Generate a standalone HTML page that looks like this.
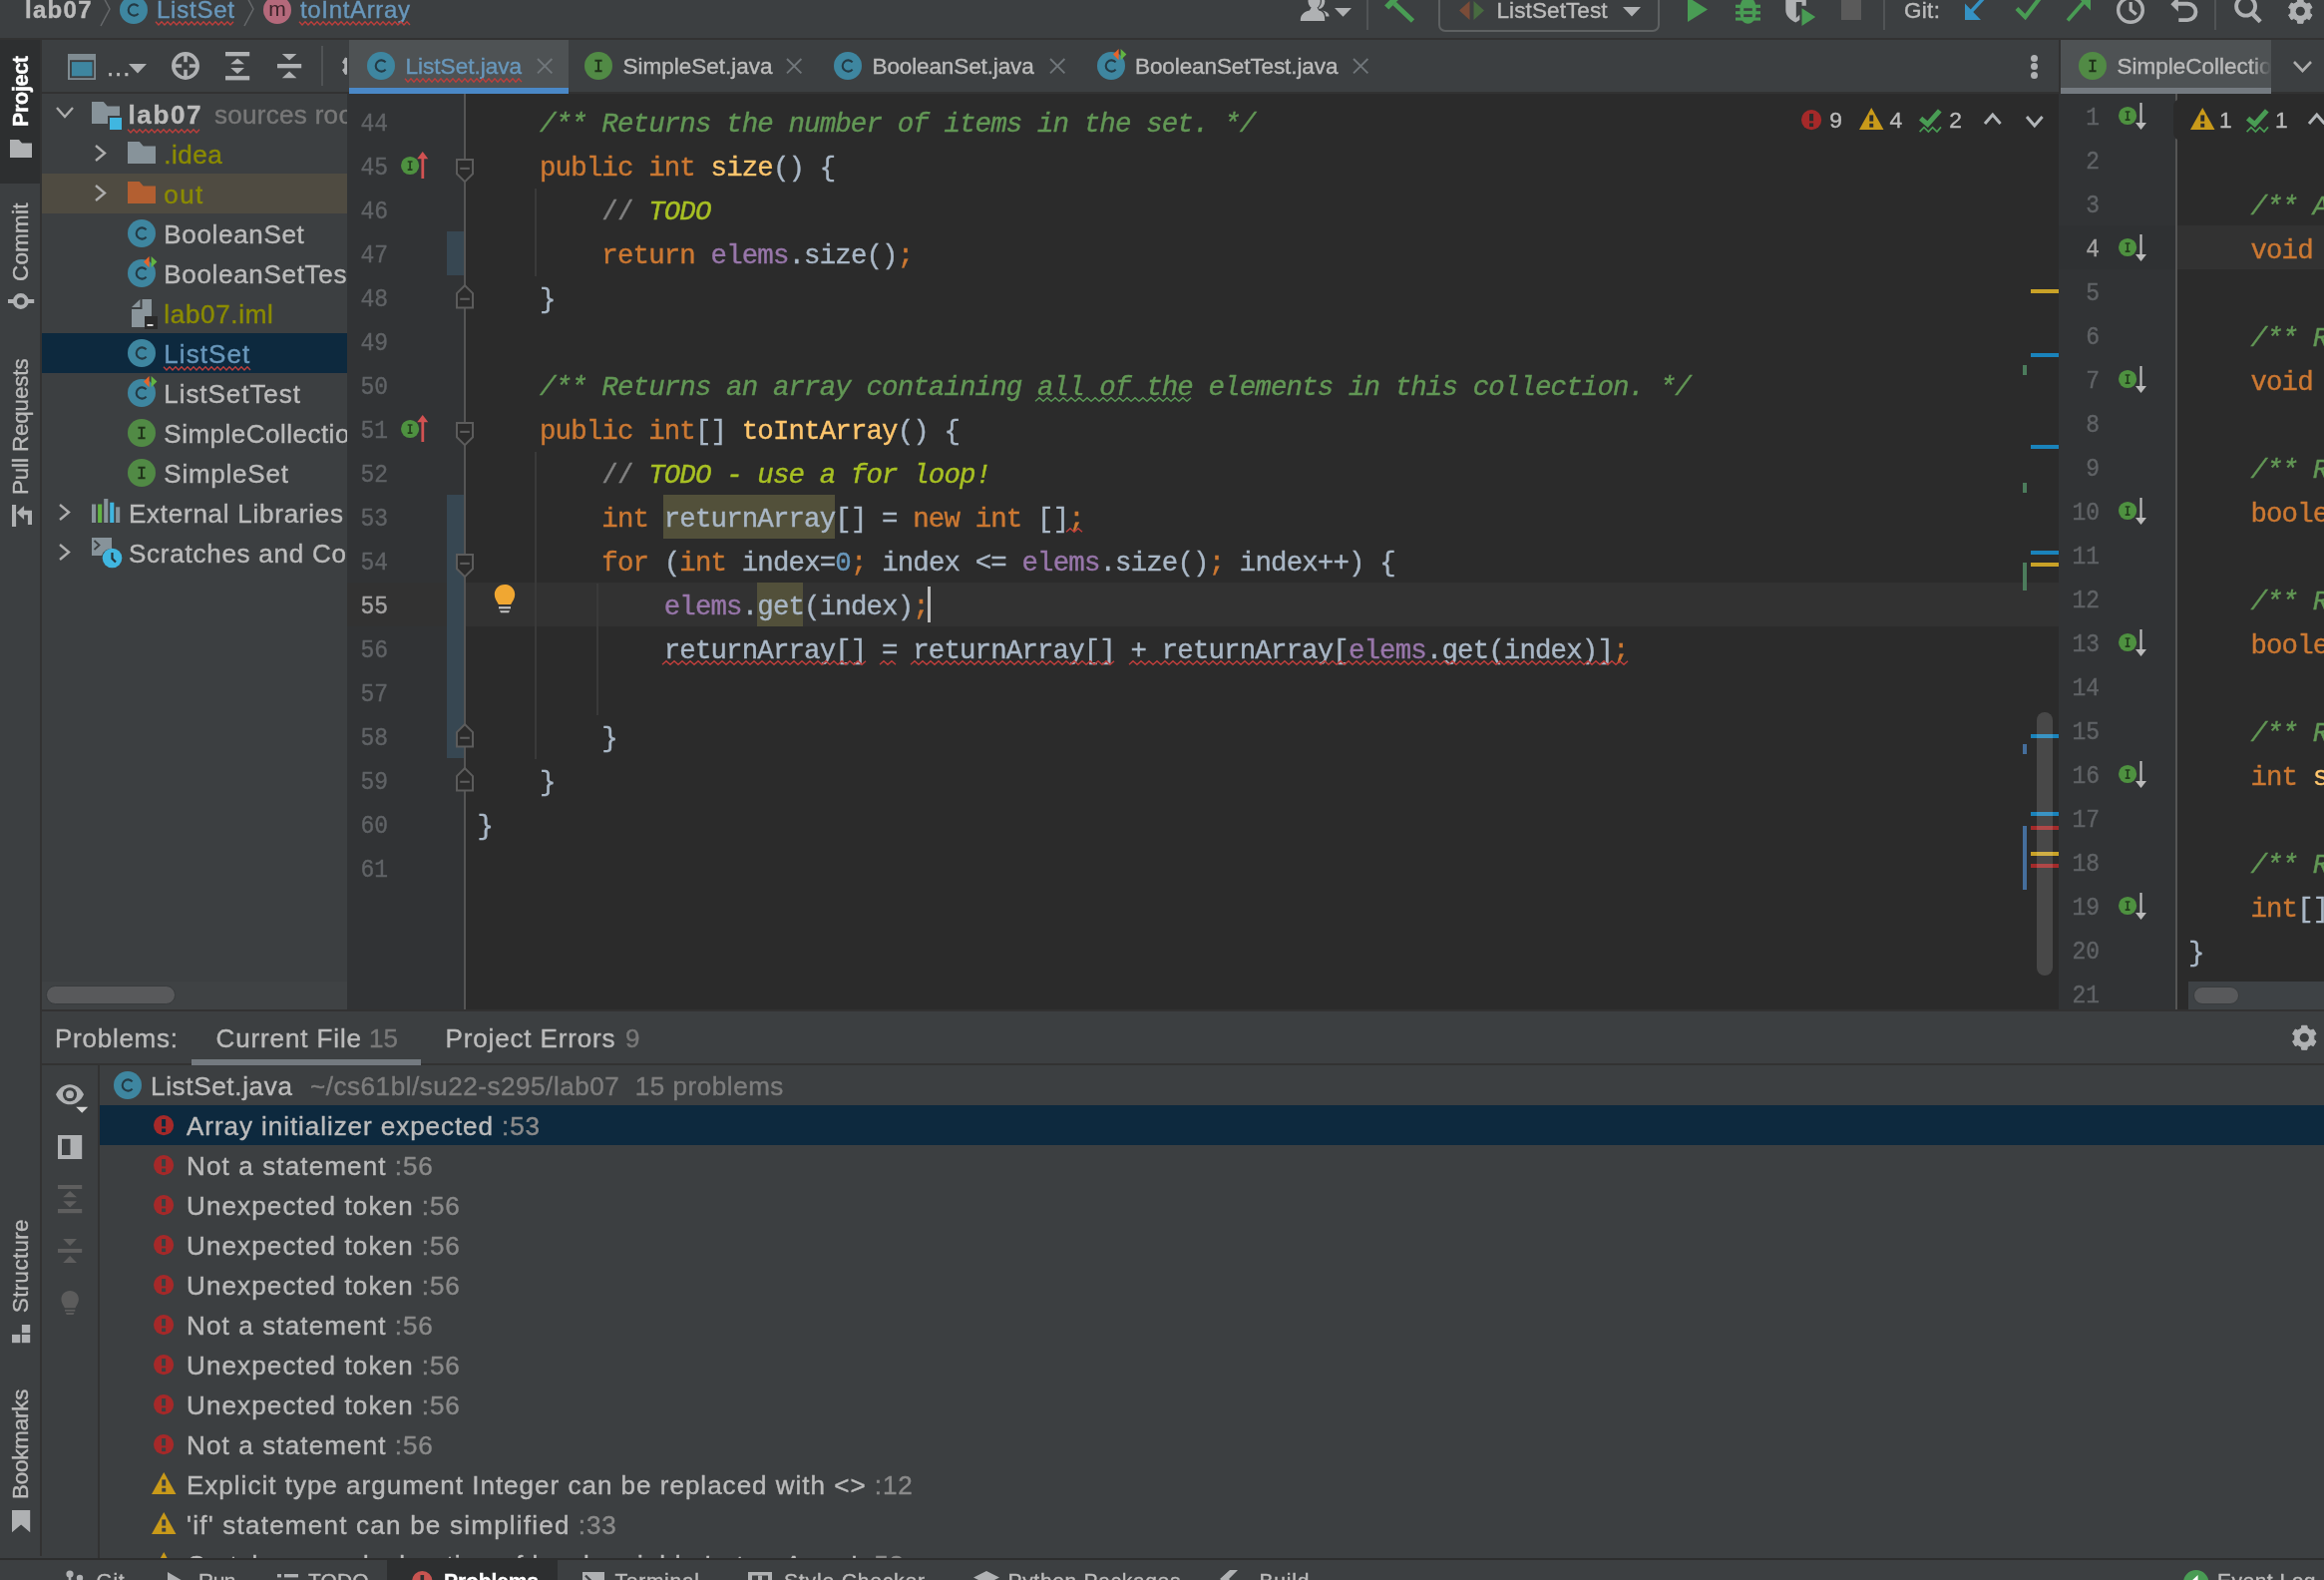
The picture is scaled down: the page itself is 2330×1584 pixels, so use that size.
<!DOCTYPE html>
<html lang="en"><head><meta charset="utf-8"><title>lab07 – ListSet.java</title>
<style>
*{box-sizing:border-box}
html,body{margin:0;padding:0}
body{width:2330px;height:1584px;overflow:hidden;position:relative;background:#3c3f41;
 font-family:"Liberation Sans",sans-serif;font-size:26px;color:#bbbbbb;-webkit-text-stroke:0.4px}
.abs{position:absolute}
.t{position:absolute;white-space:pre;line-height:40px;height:40px;margin-top:1px}
svg{position:absolute;overflow:visible}
.mono{font-family:"Liberation Mono",monospace}
.code{position:absolute;white-space:pre;font-family:"Liberation Mono",monospace;font-size:27.4px;letter-spacing:-0.843px;line-height:44px;height:44px;color:#a9b7c6}
.ln{position:absolute;white-space:pre;font-family:"Liberation Mono",monospace;font-size:25.5px;letter-spacing:0px;line-height:44px;height:44px;color:#606366;text-align:right;transform:scaleX(0.9);transform-origin:100% 50%}
.k{color:#cc7832}.d{color:#629755;font-style:italic}.c{color:#808080}.td{color:#a8c023;font-style:italic}
.f{color:#9876aa}.m{color:#ffc66d}.n{color:#6897bb}
.wavy{background-repeat:repeat-x;background-position:0 100%}
.vt{position:absolute;white-space:pre;transform-origin:0 0;transform:rotate(-90deg);line-height:40px;height:40px;font-size:24px}
</style></head>
<body>
<div id="app" style="position:absolute;left:0;top:0;width:2330px;height:1584px;will-change:transform">
<div class="abs" style="left:348px;top:94px;width:1716px;height:918px;background:#2b2b2b"></div>
<div class="abs" style="left:348px;top:94px;width:117px;height:918px;background:#313335"></div>
<div class="abs" style="left:465px;top:584px;width:1599px;height:44px;background:#323232"></div>
<div class="abs" style="left:348px;top:584px;width:117px;height:44px;background:#323232"></div>
<div class="abs" style="left:465px;top:94px;width:2px;height:918px;background:#555555"></div>
<div class="abs" style="left:448px;top:232px;width:17px;height:44px;background:#374752"></div>
<div class="abs" style="left:448px;top:496px;width:17px;height:264px;background:#374752"></div>
<div class="ln" style="left:340px;top:102.9px;width:49px;color:#606366">44</div>
<div class="ln" style="left:340px;top:146.9px;width:49px;color:#606366">45</div>
<div class="ln" style="left:340px;top:190.9px;width:49px;color:#606366">46</div>
<div class="ln" style="left:340px;top:234.9px;width:49px;color:#606366">47</div>
<div class="ln" style="left:340px;top:278.9px;width:49px;color:#606366">48</div>
<div class="ln" style="left:340px;top:322.9px;width:49px;color:#606366">49</div>
<div class="ln" style="left:340px;top:366.9px;width:49px;color:#606366">50</div>
<div class="ln" style="left:340px;top:410.9px;width:49px;color:#606366">51</div>
<div class="ln" style="left:340px;top:454.9px;width:49px;color:#606366">52</div>
<div class="ln" style="left:340px;top:498.9px;width:49px;color:#606366">53</div>
<div class="ln" style="left:340px;top:542.9px;width:49px;color:#606366">54</div>
<div class="ln" style="left:340px;top:586.9px;width:49px;color:#a4a3a3">55</div>
<div class="ln" style="left:340px;top:630.9px;width:49px;color:#606366">56</div>
<div class="ln" style="left:340px;top:674.9px;width:49px;color:#606366">57</div>
<div class="ln" style="left:340px;top:718.9px;width:49px;color:#606366">58</div>
<div class="ln" style="left:340px;top:762.9px;width:49px;color:#606366">59</div>
<div class="ln" style="left:340px;top:806.9px;width:49px;color:#606366">60</div>
<div class="ln" style="left:340px;top:850.9px;width:49px;color:#606366">61</div>
<svg style="left:401.9px;top:152px" width="34" height="30" viewBox="0 0 34 30"><circle cx="9.1" cy="14" r="9.1" fill="#4e9140"/><path d="M6.7,10 h4.8 M6.7,18.2 h4.8 M9.1,10 v8.2" stroke="#233d1c" stroke-width="1.7" fill="none"/><path d="M21.8,27 V6" stroke="#d25252" stroke-width="2.8" fill="none"/><path d="M16.2,7.2 L21.7,0 L27.3,7.2 Z" fill="#d25252"/></svg>
<svg style="left:401.9px;top:416px" width="34" height="30" viewBox="0 0 34 30"><circle cx="9.1" cy="14" r="9.1" fill="#4e9140"/><path d="M6.7,10 h4.8 M6.7,18.2 h4.8 M9.1,10 v8.2" stroke="#233d1c" stroke-width="1.7" fill="none"/><path d="M21.8,27 V6" stroke="#d25252" stroke-width="2.8" fill="none"/><path d="M16.2,7.2 L21.7,0 L27.3,7.2 Z" fill="#d25252"/></svg>
<svg style="left:457px;top:158.9px" width="18" height="25" viewBox="0 0 18 25"><path d="M1,1 H17 V15.3 L9,23.2 L1,15.3 Z" fill="#2b2b2b" stroke="#5c5c5c" stroke-width="2"/><path d="M4.2,9.9 H13.8" stroke="#5c5c5c" stroke-width="2.1"/></svg>
<svg style="left:457px;top:422.9px" width="18" height="25" viewBox="0 0 18 25"><path d="M1,1 H17 V15.3 L9,23.2 L1,15.3 Z" fill="#2b2b2b" stroke="#5c5c5c" stroke-width="2"/><path d="M4.2,9.9 H13.8" stroke="#5c5c5c" stroke-width="2.1"/></svg>
<svg style="left:457px;top:554.9px" width="18" height="25" viewBox="0 0 18 25"><path d="M1,1 H17 V15.3 L9,23.2 L1,15.3 Z" fill="#2b2b2b" stroke="#5c5c5c" stroke-width="2"/><path d="M4.2,9.9 H13.8" stroke="#5c5c5c" stroke-width="2.1"/></svg>
<svg style="left:457px;top:284.7px" width="18" height="25" viewBox="0 0 18 25"><path d="M1,23.4 H17 V9.1 L9,1.2 L1,9.1 Z" fill="#2b2b2b" stroke="#5c5c5c" stroke-width="2"/><path d="M4.2,14.8 H13.8" stroke="#5c5c5c" stroke-width="2.1"/></svg>
<svg style="left:457px;top:724.7px" width="18" height="25" viewBox="0 0 18 25"><path d="M1,23.4 H17 V9.1 L9,1.2 L1,9.1 Z" fill="#2b2b2b" stroke="#5c5c5c" stroke-width="2"/><path d="M4.2,14.8 H13.8" stroke="#5c5c5c" stroke-width="2.1"/></svg>
<svg style="left:457px;top:768.7px" width="18" height="25" viewBox="0 0 18 25"><path d="M1,23.4 H17 V9.1 L9,1.2 L1,9.1 Z" fill="#2b2b2b" stroke="#5c5c5c" stroke-width="2"/><path d="M4.2,14.8 H13.8" stroke="#5c5c5c" stroke-width="2.1"/></svg>
<div class="abs" style="left:536.0px;top:189px;width:1.5px;height:88px;background:#3a3a3a"></div>
<div class="abs" style="left:536.0px;top:453px;width:1.5px;height:308px;background:#3a3a3a"></div>
<div class="abs" style="left:598.4px;top:585px;width:1.5px;height:132px;background:#3a3a3a"></div>
<div class="abs" style="left:664.8px;top:496px;width:172.1px;height:44px;background:#52503a"></div>
<div class="abs" style="left:759.4px;top:584px;width:45.3px;height:44px;background:#52503a"></div>
<div class="code" style="left:478.6px;top:102.8px">    <span class="d">/** Returns the number of items in the set. */</span></div>
<div class="code" style="left:478.6px;top:146.8px">    <span class="k">public int </span><span class="m">size</span>() {</div>
<div class="code" style="left:478.6px;top:190.8px">        <span class="c">// </span><span class="td">TODO</span></div>
<div class="code" style="left:478.6px;top:234.8px">        <span class="k">return </span><span class="f">elems</span>.size()<span class="k">;</span></div>
<div class="code" style="left:478.6px;top:278.8px">    }</div>
<div class="code" style="left:478.6px;top:366.8px">    <span class="d">/** Returns an array containing all of the elements in this collection. */</span></div>
<div class="code" style="left:478.6px;top:410.8px">    <span class="k">public int</span>[] <span class="m">toIntArray</span>() {</div>
<div class="code" style="left:478.6px;top:454.8px">        <span class="c">// </span><span class="td">TODO - use a for loop!</span></div>
<div class="code" style="left:478.6px;top:498.8px">        <span class="k">int </span>returnArray[] = <span class="k">new int </span>[]<span class="k">;</span></div>
<div class="code" style="left:478.6px;top:542.8px">        <span class="k">for </span>(<span class="k">int </span>index=<span class="n">0</span><span class="k">; </span>index &lt;= <span class="f">elems</span>.size()<span class="k">; </span>index++) {</div>
<div class="code" style="left:478.6px;top:586.8px">            <span class="f">elems</span>.get(index)<span class="k">;</span></div>
<div class="code" style="left:478.6px;top:630.8px">            returnArray[] = returnArray[] + returnArray[<span class="f">elems</span>.get(index)]<span class="k">;</span></div>
<div class="code" style="left:478.6px;top:718.8px">        }</div>
<div class="code" style="left:478.6px;top:762.8px">    }</div>
<div class="code" style="left:478.6px;top:806.8px">}</div>
<div class="abs" style="left:929.5px;top:588px;width:3px;height:36px;background:#bbbbbb"></div>
<svg style="left:663.8px;top:661.8px" width="204.0" height="5.6"><polyline points="0.0,4.3 4.0,0.7 8.0,4.3 12.0,0.7 16.0,4.3 20.0,0.7 24.0,4.3 28.0,0.7 32.0,4.3 36.0,0.7 40.0,4.3 44.0,0.7 48.0,4.3 52.0,0.7 56.0,4.3 60.0,0.7 64.0,4.3 68.0,0.7 72.0,4.3 76.0,0.7 80.0,4.3 84.0,0.7 88.0,4.3 92.0,0.7 96.0,4.3 100.0,0.7 104.0,4.3 108.0,0.7 112.0,4.3 116.0,0.7 120.0,4.3 124.0,0.7 128.0,4.3 132.0,0.7 136.0,4.3 140.0,0.7 144.0,4.3 148.0,0.7 152.0,4.3 156.0,0.7 160.0,4.3 164.0,0.7 168.0,4.3 172.0,0.7 176.0,4.3 180.0,0.7 184.0,4.3 188.0,0.7 192.0,4.3 196.0,0.7 200.0,4.3 204.0,0.7" fill="none" stroke="#bc3f3c" stroke-width="1.5"/></svg>
<svg style="left:882.2px;top:661.8px" width="16.0" height="5.6"><polyline points="0.0,4.3 4.0,0.7 8.0,4.3 12.0,0.7 16.0,4.3" fill="none" stroke="#bc3f3c" stroke-width="1.5"/></svg>
<svg style="left:913.4px;top:661.8px" width="204.0" height="5.6"><polyline points="0.0,4.3 4.0,0.7 8.0,4.3 12.0,0.7 16.0,4.3 20.0,0.7 24.0,4.3 28.0,0.7 32.0,4.3 36.0,0.7 40.0,4.3 44.0,0.7 48.0,4.3 52.0,0.7 56.0,4.3 60.0,0.7 64.0,4.3 68.0,0.7 72.0,4.3 76.0,0.7 80.0,4.3 84.0,0.7 88.0,4.3 92.0,0.7 96.0,4.3 100.0,0.7 104.0,4.3 108.0,0.7 112.0,4.3 116.0,0.7 120.0,4.3 124.0,0.7 128.0,4.3 132.0,0.7 136.0,4.3 140.0,0.7 144.0,4.3 148.0,0.7 152.0,4.3 156.0,0.7 160.0,4.3 164.0,0.7 168.0,4.3 172.0,0.7 176.0,4.3 180.0,0.7 184.0,4.3 188.0,0.7 192.0,4.3 196.0,0.7 200.0,4.3 204.0,0.7" fill="none" stroke="#bc3f3c" stroke-width="1.5"/></svg>
<svg style="left:1131.8px;top:661.8px" width="500.0" height="5.6"><polyline points="0.0,4.3 4.0,0.7 8.0,4.3 12.0,0.7 16.0,4.3 20.0,0.7 24.0,4.3 28.0,0.7 32.0,4.3 36.0,0.7 40.0,4.3 44.0,0.7 48.0,4.3 52.0,0.7 56.0,4.3 60.0,0.7 64.0,4.3 68.0,0.7 72.0,4.3 76.0,0.7 80.0,4.3 84.0,0.7 88.0,4.3 92.0,0.7 96.0,4.3 100.0,0.7 104.0,4.3 108.0,0.7 112.0,4.3 116.0,0.7 120.0,4.3 124.0,0.7 128.0,4.3 132.0,0.7 136.0,4.3 140.0,0.7 144.0,4.3 148.0,0.7 152.0,4.3 156.0,0.7 160.0,4.3 164.0,0.7 168.0,4.3 172.0,0.7 176.0,4.3 180.0,0.7 184.0,4.3 188.0,0.7 192.0,4.3 196.0,0.7 200.0,4.3 204.0,0.7 208.0,4.3 212.0,0.7 216.0,4.3 220.0,0.7 224.0,4.3 228.0,0.7 232.0,4.3 236.0,0.7 240.0,4.3 244.0,0.7 248.0,4.3 252.0,0.7 256.0,4.3 260.0,0.7 264.0,4.3 268.0,0.7 272.0,4.3 276.0,0.7 280.0,4.3 284.0,0.7 288.0,4.3 292.0,0.7 296.0,4.3 300.0,0.7 304.0,4.3 308.0,0.7 312.0,4.3 316.0,0.7 320.0,4.3 324.0,0.7 328.0,4.3 332.0,0.7 336.0,4.3 340.0,0.7 344.0,4.3 348.0,0.7 352.0,4.3 356.0,0.7 360.0,4.3 364.0,0.7 368.0,4.3 372.0,0.7 376.0,4.3 380.0,0.7 384.0,4.3 388.0,0.7 392.0,4.3 396.0,0.7 400.0,4.3 404.0,0.7 408.0,4.3 412.0,0.7 416.0,4.3 420.0,0.7 424.0,4.3 428.0,0.7 432.0,4.3 436.0,0.7 440.0,4.3 444.0,0.7 448.0,4.3 452.0,0.7 456.0,4.3 460.0,0.7 464.0,4.3 468.0,0.7 472.0,4.3 476.0,0.7 480.0,4.3 484.0,0.7 488.0,4.3 492.0,0.7 496.0,4.3 500.0,0.7" fill="none" stroke="#bc3f3c" stroke-width="1.5"/></svg>
<svg style="left:1069.4px;top:529.4px" width="16.0" height="5.6"><polyline points="0.0,4.3 4.0,0.7 8.0,4.3 12.0,0.7 16.0,4.3" fill="none" stroke="#bc3f3c" stroke-width="1.5"/></svg>
<svg style="left:1038.2px;top:397.9px" width="156.0" height="5.6"><polyline points="0.0,4.3 4.0,0.7 8.0,4.3 12.0,0.7 16.0,4.3 20.0,0.7 24.0,4.3 28.0,0.7 32.0,4.3 36.0,0.7 40.0,4.3 44.0,0.7 48.0,4.3 52.0,0.7 56.0,4.3 60.0,0.7 64.0,4.3 68.0,0.7 72.0,4.3 76.0,0.7 80.0,4.3 84.0,0.7 88.0,4.3 92.0,0.7 96.0,4.3 100.0,0.7 104.0,4.3 108.0,0.7 112.0,4.3 116.0,0.7 120.0,4.3 124.0,0.7 128.0,4.3 132.0,0.7 136.0,4.3 140.0,0.7 144.0,4.3 148.0,0.7 152.0,4.3 156.0,0.7" fill="none" stroke="#5a9556" stroke-width="1.5"/></svg>
<svg style="left:493px;top:584.8px" width="26" height="30" viewBox="0 0 26 30"><path d="M13,1 C19,1 23.2,5.6 23.2,11 C23.2,15 21,17.5 19.2,21 H6.8 C5,17.5 2.8,15 2.8,11 C2.8,5.6 7,1 13,1 Z" fill="#f0a732"/><rect x="7" y="23.2" width="12" height="2.1" fill="#c4c4c4"/><path d="M8,27.3 H18 L17,29.2 H9 Z" fill="#c4c4c4"/></svg>
<svg style="left:1806.0px;top:110.0px" width="20.2" height="20.2" viewBox="0 0 20 20"><circle cx="10" cy="10" r="10" fill="#a52929"/><rect x="8" y="4" width="4" height="7.2" fill="#2b2b2b"/><rect x="8" y="13.3" width="4" height="3.6" fill="#2b2b2b"/></svg>
<div class="t" style="left:1834.3px;top:98.8px;font-size:22.8px;color:#bbbbbb;letter-spacing:0px;line-height:40px;height:40px;font-weight:normal;">9</div>
<svg style="left:1863.75px;top:108.2px" width="24.5" height="22" viewBox="0 0 24.5 22"><path d="M12.25,0 L24.5,22 H0 Z" fill="#c99a1a"/><rect x="10.3" y="7.4" width="3.9" height="6.2" fill="#2b2b2b"/><rect x="10.3" y="15.8" width="3.9" height="3.8" fill="#2b2b2b"/></svg>
<div class="t" style="left:1894.5px;top:98.8px;font-size:22.8px;color:#bbbbbb;letter-spacing:0px;line-height:40px;height:40px;font-weight:normal;">4</div>
<svg style="left:1924.4px;top:109.3px" width="24" height="26" viewBox="0 0 24 26"><path d="M1.6,9.6 L8.6,15.6 L20.8,1.8" fill="none" stroke="#499c54" stroke-width="5"/><polyline points="0.6,23.2 5,18.6 9.4,23 13.6,18.6 18,23 22,18.4" fill="none" stroke="#499c54" stroke-width="1.7"/></svg>
<div class="t" style="left:1954.3px;top:98.8px;font-size:22.8px;color:#bbbbbb;letter-spacing:0px;line-height:40px;height:40px;font-weight:normal;">2</div>
<svg style="left:1989px;top:113.6px" width="17.6" height="11"><polyline points="1,10 8.8,1 16.6,10" fill="none" stroke="#b2b6b9" stroke-width="3"/></svg>
<svg style="left:2031.2px;top:115.6px" width="17.6" height="11"><polyline points="1,1 8.8,10 16.6,1" fill="none" stroke="#b2b6b9" stroke-width="3"/></svg>
<div class="abs" style="left:2036px;top:290px;width:28px;height:4px;background:#c9a227"></div>
<div class="abs" style="left:2036px;top:354px;width:28px;height:4px;background:#1a83bb"></div>
<div class="abs" style="left:2036px;top:446px;width:28px;height:4px;background:#1a83bb"></div>
<div class="abs" style="left:2036px;top:552px;width:28px;height:4px;background:#1a83bb"></div>
<div class="abs" style="left:2036px;top:564px;width:28px;height:4px;background:#c9a227"></div>
<div class="abs" style="left:2036px;top:736px;width:28px;height:4px;background:#1a83bb"></div>
<div class="abs" style="left:2036px;top:814px;width:28px;height:4px;background:#1a83bb"></div>
<div class="abs" style="left:2036px;top:828px;width:28px;height:4px;background:#a32a2a"></div>
<div class="abs" style="left:2036px;top:854px;width:28px;height:4px;background:#c9a227"></div>
<div class="abs" style="left:2036px;top:866px;width:28px;height:4px;background:#a32a2a"></div>
<div class="abs" style="left:2028px;top:366px;width:4px;height:10px;background:#4c7c5c"></div>
<div class="abs" style="left:2028px;top:484px;width:4px;height:10px;background:#4c7c5c"></div>
<div class="abs" style="left:2028px;top:564px;width:4px;height:28px;background:#4c7c5c"></div>
<div class="abs" style="left:2028px;top:746px;width:4px;height:10px;background:#456e9c"></div>
<div class="abs" style="left:2028px;top:828px;width:4px;height:64px;background:#456e9c"></div>
<div class="abs" style="left:2042px;top:713.7px;width:16px;height:264.5px;border-radius:8px;background:rgba(255,255,255,0.14)"></div>
<div class="abs" style="left:2066px;top:94px;width:264px;height:918px;background:#2b2b2b"></div>
<div class="abs" style="left:2064px;top:94px;width:118px;height:918px;background:#313335"></div>
<div class="abs" style="left:2064px;top:226.4px;width:118px;height:43.6px;background:#2f3133"></div>
<div class="abs" style="left:2182px;top:226.4px;width:148px;height:43.6px;background:#323232"></div>
<div class="abs" style="left:2181px;top:94px;width:2px;height:918px;background:#555555"></div>
<div class="ln" style="left:2057px;top:97.0px;width:48px;color:#606366">1</div>
<div class="ln" style="left:2057px;top:141.0px;width:48px;color:#606366">2</div>
<div class="ln" style="left:2057px;top:185.0px;width:48px;color:#606366">3</div>
<div class="ln" style="left:2057px;top:229.0px;width:48px;color:#a4a3a3">4</div>
<div class="ln" style="left:2057px;top:273.0px;width:48px;color:#606366">5</div>
<div class="ln" style="left:2057px;top:317.0px;width:48px;color:#606366">6</div>
<div class="ln" style="left:2057px;top:361.0px;width:48px;color:#606366">7</div>
<div class="ln" style="left:2057px;top:405.0px;width:48px;color:#606366">8</div>
<div class="ln" style="left:2057px;top:449.0px;width:48px;color:#606366">9</div>
<div class="ln" style="left:2057px;top:493.0px;width:48px;color:#606366">10</div>
<div class="ln" style="left:2057px;top:537.0px;width:48px;color:#606366">11</div>
<div class="ln" style="left:2057px;top:581.0px;width:48px;color:#606366">12</div>
<div class="ln" style="left:2057px;top:625.0px;width:48px;color:#606366">13</div>
<div class="ln" style="left:2057px;top:669.0px;width:48px;color:#606366">14</div>
<div class="ln" style="left:2057px;top:713.0px;width:48px;color:#606366">15</div>
<div class="ln" style="left:2057px;top:757.0px;width:48px;color:#606366">16</div>
<div class="ln" style="left:2057px;top:801.0px;width:48px;color:#606366">17</div>
<div class="ln" style="left:2057px;top:845.0px;width:48px;color:#606366">18</div>
<div class="ln" style="left:2057px;top:889.0px;width:48px;color:#606366">19</div>
<div class="ln" style="left:2057px;top:933.0px;width:48px;color:#606366">20</div>
<div class="ln" style="left:2057px;top:977.0px;width:48px;color:#606366">21</div>
<svg style="left:2123.9px;top:102px" width="34" height="30" viewBox="0 0 34 30"><circle cx="9.1" cy="14" r="9.1" fill="#4e9140"/><path d="M6.7,10 h4.8 M6.7,18.2 h4.8 M9.1,10 v8.2" stroke="#233d1c" stroke-width="1.7" fill="none"/><path d="M22.5,1 V23" stroke="#bbbbbb" stroke-width="2.2" fill="none"/><path d="M17,21 L22.5,28 L28,21 Z" fill="#bbbbbb"/></svg>
<svg style="left:2123.9px;top:234px" width="34" height="30" viewBox="0 0 34 30"><circle cx="9.1" cy="14" r="9.1" fill="#4e9140"/><path d="M6.7,10 h4.8 M6.7,18.2 h4.8 M9.1,10 v8.2" stroke="#233d1c" stroke-width="1.7" fill="none"/><path d="M22.5,1 V23" stroke="#bbbbbb" stroke-width="2.2" fill="none"/><path d="M17,21 L22.5,28 L28,21 Z" fill="#bbbbbb"/></svg>
<svg style="left:2123.9px;top:366px" width="34" height="30" viewBox="0 0 34 30"><circle cx="9.1" cy="14" r="9.1" fill="#4e9140"/><path d="M6.7,10 h4.8 M6.7,18.2 h4.8 M9.1,10 v8.2" stroke="#233d1c" stroke-width="1.7" fill="none"/><path d="M22.5,1 V23" stroke="#bbbbbb" stroke-width="2.2" fill="none"/><path d="M17,21 L22.5,28 L28,21 Z" fill="#bbbbbb"/></svg>
<svg style="left:2123.9px;top:498px" width="34" height="30" viewBox="0 0 34 30"><circle cx="9.1" cy="14" r="9.1" fill="#4e9140"/><path d="M6.7,10 h4.8 M6.7,18.2 h4.8 M9.1,10 v8.2" stroke="#233d1c" stroke-width="1.7" fill="none"/><path d="M22.5,1 V23" stroke="#bbbbbb" stroke-width="2.2" fill="none"/><path d="M17,21 L22.5,28 L28,21 Z" fill="#bbbbbb"/></svg>
<svg style="left:2123.9px;top:630px" width="34" height="30" viewBox="0 0 34 30"><circle cx="9.1" cy="14" r="9.1" fill="#4e9140"/><path d="M6.7,10 h4.8 M6.7,18.2 h4.8 M9.1,10 v8.2" stroke="#233d1c" stroke-width="1.7" fill="none"/><path d="M22.5,1 V23" stroke="#bbbbbb" stroke-width="2.2" fill="none"/><path d="M17,21 L22.5,28 L28,21 Z" fill="#bbbbbb"/></svg>
<svg style="left:2123.9px;top:762px" width="34" height="30" viewBox="0 0 34 30"><circle cx="9.1" cy="14" r="9.1" fill="#4e9140"/><path d="M6.7,10 h4.8 M6.7,18.2 h4.8 M9.1,10 v8.2" stroke="#233d1c" stroke-width="1.7" fill="none"/><path d="M22.5,1 V23" stroke="#bbbbbb" stroke-width="2.2" fill="none"/><path d="M17,21 L22.5,28 L28,21 Z" fill="#bbbbbb"/></svg>
<svg style="left:2123.9px;top:894px" width="34" height="30" viewBox="0 0 34 30"><circle cx="9.1" cy="14" r="9.1" fill="#4e9140"/><path d="M6.7,10 h4.8 M6.7,18.2 h4.8 M9.1,10 v8.2" stroke="#233d1c" stroke-width="1.7" fill="none"/><path d="M22.5,1 V23" stroke="#bbbbbb" stroke-width="2.2" fill="none"/><path d="M17,21 L22.5,28 L28,21 Z" fill="#bbbbbb"/></svg>
<div class="abs" style="left:2183px;top:94px;width:147px;height:918px;overflow:hidden">
<div class="code" style="left:11px;top:91.6px">    <span class="d">/** Adds k to the set. */</span></div>
<div class="code" style="left:11px;top:135.6px">    <span class="k">void </span>add(<span class="k">int </span>k);</div>
<div class="code" style="left:11px;top:223.6px">    <span class="d">/** Removes k from the set. */</span></div>
<div class="code" style="left:11px;top:267.6px">    <span class="k">void </span>remove(<span class="k">int </span>k);</div>
<div class="code" style="left:11px;top:355.6px">    <span class="d">/** Return true if k is in this set, false otherwise. */</span></div>
<div class="code" style="left:11px;top:399.6px">    <span class="k">boolean </span>contains(<span class="k">int </span>k);</div>
<div class="code" style="left:11px;top:487.6px">    <span class="d">/** Return true if this set is empty, false otherwise. */</span></div>
<div class="code" style="left:11px;top:531.6px">    <span class="k">boolean </span>isEmpty();</div>
<div class="code" style="left:11px;top:619.6px">    <span class="d">/** Returns the number of items in the set. */</span></div>
<div class="code" style="left:11px;top:663.6px">    <span class="k">int </span><span class="m">size</span>();</div>
<div class="code" style="left:11px;top:751.6px">    <span class="d">/** Returns an array containing all of the elements in this collection. */</span></div>
<div class="code" style="left:11px;top:795.6px">    <span class="k">int</span>[] <span class="m">toIntArray</span>();</div>
<div class="code" style="left:11px;top:839.6px">}</div>
</div>
<div class="abs" style="left:2179px;top:99px;width:160px;height:42px;border-radius:8px;background:#2b2b2b"></div>
<svg style="left:2195.75px;top:108.2px" width="24.5" height="22" viewBox="0 0 24.5 22"><path d="M12.25,0 L24.5,22 H0 Z" fill="#c99a1a"/><rect x="10.3" y="7.4" width="3.9" height="6.2" fill="#2b2b2b"/><rect x="10.3" y="15.8" width="3.9" height="3.8" fill="#2b2b2b"/></svg>
<div class="t" style="left:2225px;top:98.8px;font-size:22.8px;color:#bbbbbb;letter-spacing:0px;line-height:40px;height:40px;font-weight:normal;">1</div>
<svg style="left:2251.5px;top:109.3px" width="24" height="26" viewBox="0 0 24 26"><path d="M1.6,9.6 L8.6,15.6 L20.8,1.8" fill="none" stroke="#499c54" stroke-width="5"/><polyline points="0.6,23.2 5,18.6 9.4,23 13.6,18.6 18,23 22,18.4" fill="none" stroke="#499c54" stroke-width="1.7"/></svg>
<div class="t" style="left:2281px;top:98.8px;font-size:22.8px;color:#bbbbbb;letter-spacing:0px;line-height:40px;height:40px;font-weight:normal;">1</div>
<svg style="left:2314px;top:113.6px" width="17.6" height="11"><polyline points="1,10 8.8,1 16.6,10" fill="none" stroke="#b2b6b9" stroke-width="3"/></svg>
<div class="abs" style="left:2194px;top:984px;width:136px;height:28px;background:#3e4245"></div>
<div class="abs" style="left:2198.6px;top:988.6px;width:46.8px;height:18.5px;border-radius:9.3px;background:#58595b;border:1.2px solid #383b3d"></div>
<div class="abs" style="left:348px;top:40px;width:1982px;height:52px;background:#3c3f41"></div>
<div class="abs" style="left:348px;top:92px;width:1982px;height:2px;background:#323232"></div>
<div class="abs" style="left:350px;top:40px;width:220px;height:48px;background:#4e5254"></div>
<div class="abs" style="left:350px;top:88px;width:220px;height:6px;background:#4a88c7"></div>
<svg style="left:368px;top:52px" width="28" height="28" viewBox="0 0 28 28"><circle cx="14" cy="14" r="14" fill="#3e86a0"/><path d="M18.6,10.4 A5.6,5.6 0 1 0 18.6,17.6" fill="none" stroke="#233a45" stroke-width="2.1"/></svg>
<div class="t" style="left:406.5px;top:46px;font-size:22.5px;color:#6897bb;letter-spacing:0.027px;line-height:40px;height:40px;font-weight:normal;">ListSet.java</div>
<svg style="left:539.1999999999999px;top:58.8px" width="14.4" height="14.4"><path d="M0,0 L14.4,14.4 M14.4,0 L0,14.4" stroke="#70767a" stroke-width="1.9" fill="none"/></svg>
<svg style="left:406px;top:78px" width="117.0" height="5.4"><polyline points="0.0,0.7 3.0,4.1 6.0,0.7 9.0,4.1 12.0,0.7 15.0,4.1 18.0,0.7 21.0,4.1 24.0,0.7 27.0,4.1 30.0,0.7 33.0,4.1 36.0,0.7 39.0,4.1 42.0,0.7 45.0,4.1 48.0,0.7 51.0,4.1 54.0,0.7 57.0,4.1 60.0,0.7 63.0,4.1 66.0,0.7 69.0,4.1 72.0,0.7 75.0,4.1 78.0,0.7 81.0,4.1 84.0,0.7 87.0,4.1 90.0,0.7 93.0,4.1 96.0,0.7 99.0,4.1 102.0,0.7 105.0,4.1 108.0,0.7 111.0,4.1 114.0,0.7 117.0,4.1" fill="none" stroke="#bc3f3c" stroke-width="1.4"/></svg>
<svg style="left:586px;top:52px" width="28" height="28" viewBox="0 0 28 28"><circle cx="14" cy="14" r="14" fill="#518a45"/><path d="M10.4,8.8 h7.2 M10.4,19.2 h7.2 M14,8.8 v10.4" stroke="#1f3319" stroke-width="2.1" fill="none"/></svg>
<div class="t" style="left:624.5px;top:46px;font-size:22.5px;color:#bbbbbb;letter-spacing:-0.005px;line-height:40px;height:40px;font-weight:normal;">SimpleSet.java</div>
<svg style="left:788.8px;top:58.8px" width="14.4" height="14.4"><path d="M0,0 L14.4,14.4 M14.4,0 L0,14.4" stroke="#70767a" stroke-width="1.9" fill="none"/></svg>
<svg style="left:836px;top:52px" width="28" height="28" viewBox="0 0 28 28"><circle cx="14" cy="14" r="14" fill="#3e86a0"/><path d="M18.6,10.4 A5.6,5.6 0 1 0 18.6,17.6" fill="none" stroke="#233a45" stroke-width="2.1"/></svg>
<div class="t" style="left:874.5px;top:46px;font-size:22.5px;color:#bbbbbb;letter-spacing:-0.119px;line-height:40px;height:40px;font-weight:normal;">BooleanSet.java</div>
<svg style="left:1052.8px;top:58.8px" width="14.4" height="14.4"><path d="M0,0 L14.4,14.4 M14.4,0 L0,14.4" stroke="#70767a" stroke-width="1.9" fill="none"/></svg>
<svg style="left:1100px;top:52px" width="28" height="28" viewBox="0 0 28 28"><circle cx="14" cy="14" r="14" fill="#3e86a0"/><path d="M14.5,-6 h16 v13.5 h-16 z" fill="none"/><polygon points="15.2,1 22.4,-6 22.4,8" fill="#3c3f41" opacity="0"/><path d="M18.6,10.4 A5.6,5.6 0 1 0 18.6,17.6" fill="none" stroke="#233a45" stroke-width="2.1"/><rect x="15" y="-4" width="15" height="11" fill="none"/><polygon points="16,2.6 21.6,-3 21.6,8.2" fill="#e8642a"/><polygon points="23.6,-3 29.4,2.6 23.6,8.2" fill="#62b543"/></svg>
<div class="t" style="left:1138px;top:46px;font-size:22.5px;color:#bbbbbb;letter-spacing:-0.096px;line-height:40px;height:40px;font-weight:normal;">BooleanSetTest.java</div>
<svg style="left:1356.8px;top:58.8px" width="14.4" height="14.4"><path d="M0,0 L14.4,14.4 M14.4,0 L0,14.4" stroke="#70767a" stroke-width="1.9" fill="none"/></svg>
<div class="abs" style="left:2036px;top:54.5px;width:7px;height:7px;border-radius:50%;background:#afb1b3"></div>
<div class="abs" style="left:2036px;top:63px;width:7px;height:7px;border-radius:50%;background:#afb1b3"></div>
<div class="abs" style="left:2036px;top:71.5px;width:7px;height:7px;border-radius:50%;background:#afb1b3"></div>
<div class="abs" style="left:2064px;top:40px;width:2px;height:54px;background:#323232"></div>
<div class="abs" style="left:2066px;top:40px;width:211px;height:48px;background:#4e5254"></div>
<div class="abs" style="left:2066px;top:88px;width:211px;height:6px;background:#747a80"></div>
<svg style="left:2084px;top:52px" width="28" height="28" viewBox="0 0 28 28"><circle cx="14" cy="14" r="14" fill="#518a45"/><path d="M10.4,8.8 h7.2 M10.4,19.2 h7.2 M14,8.8 v10.4" stroke="#1f3319" stroke-width="2.1" fill="none"/></svg>
<div class="abs" style="left:2066px;top:40px;width:211px;height:48px;overflow:hidden"><div class="t" style="left:56.5px;top:6px;font-size:22.5px;color:#bbbbbb;letter-spacing:0px;line-height:40px;height:40px;font-weight:normal;">SimpleCollection.java</div><div class="abs" style="left:191px;top:0;width:20px;height:48px;background:linear-gradient(90deg,rgba(78,82,84,0),#4e5254)"></div></div>
<svg style="left:2299px;top:61px" width="19" height="11"><polyline points="1,1 9.5,10 18,1" fill="none" stroke="#adadad" stroke-width="2.6"/></svg>
<div class="abs" style="left:0;top:40px;width:40px;height:1520px;background:#3c3f41"></div>
<div class="abs" style="left:40px;top:40px;width:2px;height:1520px;background:#323232"></div>
<div class="abs" style="left:0;top:40px;width:40px;height:144px;background:#2d2f30"></div>
<div class="vt" style="left:1px;top:127px;color:#ffffff;font-weight:bold;font-size:21.5px;letter-spacing:-0.314px">Project</div>
<div class="vt" style="left:1px;top:282px;color:#bbbbbb;font-weight:normal;font-size:22.3px;letter-spacing:0.338px">Commit</div>
<div class="vt" style="left:1px;top:496px;color:#bbbbbb;font-weight:normal;font-size:22.3px;letter-spacing:-0.082px">Pull Requests</div>
<div class="vt" style="left:1px;top:1315.5px;color:#bbbbbb;font-weight:normal;font-size:22.3px;letter-spacing:0.377px">Structure</div>
<div class="vt" style="left:1px;top:1502.5px;color:#bbbbbb;font-weight:normal;font-size:22.3px;letter-spacing:-0.129px">Bookmarks</div>
<svg style="left:10px;top:140px" width="22" height="18"><path d="M0,0 H9 L12,3.5 H22 V18 H0 Z" fill="#afb1b3"/></svg>
<svg style="left:7.8px;top:291px" width="27" height="22"><circle cx="12.8" cy="11" r="5.9" fill="none" stroke="#afb1b3" stroke-width="4.1"/><path d="M0,11 H7 M18.6,11 H26.2" stroke="#afb1b3" stroke-width="4.2"/></svg>
<svg style="left:12px;top:506px" width="20" height="22"><rect x="0" y="0" width="4.1" height="22" fill="#afb1b3"/><path d="M4.8,7.9 L12.1,1 V5.8 H20 V20 H15.9 V10.2 H12.1 V15 Z" fill="#afb1b3"/></svg>
<svg style="left:12px;top:1328px" width="18.2" height="18.2"><rect x="9.9" y="0" width="8.3" height="8.3" fill="#afb1b3"/><rect x="0" y="9.9" width="8.3" height="8.3" fill="#afb1b3"/><rect x="9.9" y="9.9" width="8.3" height="8.3" fill="#afb1b3"/></svg>
<svg style="left:11.9px;top:1513.9px" width="18.2" height="22.2"><path d="M0,0 H18.2 V22.2 L9.1,14.6 L0,22.2 Z" fill="#afb1b3"/></svg>
<div class="abs" style="left:42px;top:40px;width:306px;height:972px;background:#3c3f41;overflow:hidden">
<div class="abs" style="left:0;top:52px;width:306px;height:2px;background:#323232"></div>
<div class="abs" style="left:0;top:134px;width:306px;height:40px;background:#4f4b41"></div>
<div class="abs" style="left:0;top:294px;width:306px;height:40px;background:#0d293e"></div>
</div>
<div class="abs" style="left:42px;top:40px;width:306px;height:972px;overflow:hidden"><div class="abs" style="left:-42px;top:-40px;width:2330px;height:1584px">
<svg style="left:68px;top:54px" width="28" height="26"><rect x="0" y="0" width="28" height="26" fill="#7f8b91"/><rect x="2" y="6.2" width="24.2" height="18" fill="#3c3f41"/><rect x="3.9" y="8.1" width="20.6" height="14.2" fill="#3e86a0"/></svg>
<div class="t" style="left:107px;top:45.5px;font-size:26px;color:#bbbbbb;letter-spacing:0.9px;line-height:40px;height:40px;font-weight:normal;">...</div>
<svg style="left:129px;top:64px" width="18" height="10"><path d="M0,0 H18 L9,9.5 Z" fill="#afb1b3"/></svg>
<svg style="left:171.8px;top:51.9px" width="28" height="28"><circle cx="14" cy="14" r="12.1" fill="none" stroke="#afb1b3" stroke-width="3.7"/><path d="M14,2 V10.2 M14,17.8 V26 M2,14 H10.2 M17.8,14 H26" stroke="#afb1b3" stroke-width="3.5"/></svg>
<svg style="left:226px;top:51.7px" width="24.2" height="28.4"><rect x="0" y="0" width="24.2" height="4.3" fill="#afb1b3"/><rect x="0" y="24.1" width="24.2" height="4.3" fill="#afb1b3"/><path d="M5.2,12.3 L12.1,6.5 L19,12.3 Z M5.2,16.1 L12.1,22 L19,16.1 Z" fill="#afb1b3"/></svg>
<svg style="left:278px;top:53.9px" width="24.2" height="24.4"><rect x="0" y="10" width="24.2" height="4.3" fill="#afb1b3"/><path d="M4.8,0 L12.1,6.5 L19.4,0 Z M4.8,24.3 L12.1,17.6 L19.4,24.3 Z" fill="#afb1b3"/></svg>
<div class="abs" style="left:322px;top:46px;width:2px;height:40px;background:#515456"></div>
<svg style="left:342.7px;top:53.7px" width="24.6" height="24.6"><polygon points="9.30,3.06 9.62,0.30 14.98,0.30 15.30,3.06 18.80,5.08 21.35,3.97 24.04,8.62 21.80,10.28 21.80,14.32 24.04,15.98 21.35,20.63 18.80,19.52 15.30,21.54 14.98,24.30 9.62,24.30 9.30,21.54 5.80,19.52 3.25,20.63 0.56,15.98 2.80,14.32 2.80,10.28 0.56,8.62 3.25,3.97 5.80,5.08" fill="#afb1b3" stroke="#afb1b3" stroke-width="1" stroke-linejoin="round"/><circle cx="12.3" cy="12.3" r="4.55" fill="#3c3f41"/></svg>
<svg style="left:56px;top:107px" width="18" height="11"><polyline points="1,1 9.0,10 17,1" fill="none" stroke="#adadad" stroke-width="2.4"/></svg>
<svg style="left:92px;top:102px" width="28" height="22"><path d="M0,0 H11.76 L15.680000000000001,4.4 H28 V22 H0 Z" fill="#87939a"/></svg>
<div class="abs" style="left:108px;top:116px;width:14px;height:14px;background:#3c3f41"></div>
<div class="abs" style="left:110px;top:118px;width:12px;height:12px;background:#40b6e0"></div>
<div class="t" style="left:128.5px;top:94px;font-size:26px;color:#bbbbbb;letter-spacing:1.628px;line-height:40px;height:40px;font-weight:bold;">lab07</div>
<svg style="left:128px;top:128.5px" width="72.0" height="5.2"><polyline points="0.0,0.7 3.0,3.9 6.0,0.7 9.0,3.9 12.0,0.7 15.0,3.9 18.0,0.7 21.0,3.9 24.0,0.7 27.0,3.9 30.0,0.7 33.0,3.9 36.0,0.7 39.0,3.9 42.0,0.7 45.0,3.9 48.0,0.7 51.0,3.9 54.0,0.7 57.0,3.9 60.0,0.7 63.0,3.9 66.0,0.7 69.0,3.9 72.0,0.7" fill="none" stroke="#bc3f3c" stroke-width="1.4"/></svg>
<div class="t" style="left:215px;top:94px;font-size:26px;color:#787878;letter-spacing:0.3px;line-height:40px;height:40px;font-weight:normal;">sources root</div>
<svg style="left:95px;top:145px" width="11" height="17"><polyline points="1,1 10,8.5 1,16" fill="none" stroke="#adadad" stroke-width="2.4"/></svg>
<svg style="left:128px;top:142px" width="28" height="22"><path d="M0,0 H11.76 L15.680000000000001,4.4 H28 V22 H0 Z" fill="#87939a"/></svg>
<div class="t" style="left:164.3px;top:134px;font-size:26px;color:#8b8b00;letter-spacing:0.529px;line-height:40px;height:40px;font-weight:normal;">.idea</div>
<svg style="left:95px;top:185px" width="11" height="17"><polyline points="1,1 10,8.5 1,16" fill="none" stroke="#adadad" stroke-width="2.4"/></svg>
<svg style="left:128px;top:182px" width="28" height="22"><path d="M0,0 H11.76 L15.680000000000001,4.4 H28 V22 H0 Z" fill="#b35f31"/></svg>
<div class="t" style="left:164.3px;top:174px;font-size:26px;color:#8b8b00;letter-spacing:1.428px;line-height:40px;height:40px;font-weight:normal;">out</div>
<svg style="left:128px;top:220px" width="28" height="28" viewBox="0 0 28 28"><circle cx="14" cy="14" r="14" fill="#3e86a0"/><path d="M18.6,10.4 A5.6,5.6 0 1 0 18.6,17.6" fill="none" stroke="#233a45" stroke-width="2.1"/></svg>
<div class="t" style="left:164.3px;top:214px;font-size:26px;color:#bbbbbb;letter-spacing:0.672px;line-height:40px;height:40px;font-weight:normal;">BooleanSet</div>
<svg style="left:128px;top:260px" width="28" height="28" viewBox="0 0 28 28"><circle cx="14" cy="14" r="14" fill="#3e86a0"/><path d="M14.5,-6 h16 v13.5 h-16 z" fill="none"/><polygon points="15.2,1 22.4,-6 22.4,8" fill="#3c3f41" opacity="0"/><path d="M18.6,10.4 A5.6,5.6 0 1 0 18.6,17.6" fill="none" stroke="#233a45" stroke-width="2.1"/><rect x="15" y="-4" width="15" height="11" fill="none"/><polygon points="16,2.6 21.6,-3 21.6,8.2" fill="#e8642a"/><polygon points="23.6,-3 29.4,2.6 23.6,8.2" fill="#62b543"/></svg>
<div class="t" style="left:164.3px;top:254px;font-size:26px;color:#bbbbbb;letter-spacing:0.682px;line-height:40px;height:40px;font-weight:normal;">BooleanSetTest</div>
<svg style="left:132px;top:300px" width="26" height="30"><path d="M0,8 L8.5,0 V8 Z" fill="#8a959b"/><path d="M10.5,0 H20 V28 H0 V10 H10.5 Z" fill="#8a959b"/><rect x="13" y="17" width="13" height="13" fill="#2b2b2b"/><rect x="15.5" y="25" width="6" height="2" fill="#d8d8d8"/></svg>
<div class="t" style="left:164.3px;top:294px;font-size:26px;color:#8b8b00;letter-spacing:0.68px;line-height:40px;height:40px;font-weight:normal;">lab07.iml</div>
<svg style="left:128px;top:340px" width="28" height="28" viewBox="0 0 28 28"><circle cx="14" cy="14" r="14" fill="#3e86a0"/><path d="M18.6,10.4 A5.6,5.6 0 1 0 18.6,17.6" fill="none" stroke="#233a45" stroke-width="2.1"/></svg>
<div class="t" style="left:164.3px;top:334px;font-size:26px;color:#6897bb;letter-spacing:1.085px;line-height:40px;height:40px;font-weight:normal;">ListSet</div>
<svg style="left:164px;top:367.4px" width="87.0" height="5.2"><polyline points="0.0,0.7 3.0,3.9 6.0,0.7 9.0,3.9 12.0,0.7 15.0,3.9 18.0,0.7 21.0,3.9 24.0,0.7 27.0,3.9 30.0,0.7 33.0,3.9 36.0,0.7 39.0,3.9 42.0,0.7 45.0,3.9 48.0,0.7 51.0,3.9 54.0,0.7 57.0,3.9 60.0,0.7 63.0,3.9 66.0,0.7 69.0,3.9 72.0,0.7 75.0,3.9 78.0,0.7 81.0,3.9 84.0,0.7 87.0,3.9" fill="none" stroke="#bc3f3c" stroke-width="1.4"/></svg>
<svg style="left:128px;top:380px" width="28" height="28" viewBox="0 0 28 28"><circle cx="14" cy="14" r="14" fill="#3e86a0"/><path d="M14.5,-6 h16 v13.5 h-16 z" fill="none"/><polygon points="15.2,1 22.4,-6 22.4,8" fill="#3c3f41" opacity="0"/><path d="M18.6,10.4 A5.6,5.6 0 1 0 18.6,17.6" fill="none" stroke="#233a45" stroke-width="2.1"/><rect x="15" y="-4" width="15" height="11" fill="none"/><polygon points="16,2.6 21.6,-3 21.6,8.2" fill="#e8642a"/><polygon points="23.6,-3 29.4,2.6 23.6,8.2" fill="#62b543"/></svg>
<div class="t" style="left:164.3px;top:374px;font-size:26px;color:#bbbbbb;letter-spacing:0.943px;line-height:40px;height:40px;font-weight:normal;">ListSetTest</div>
<svg style="left:128px;top:420px" width="28" height="28" viewBox="0 0 28 28"><circle cx="14" cy="14" r="14" fill="#518a45"/><path d="M10.4,8.8 h7.2 M10.4,19.2 h7.2 M14,8.8 v10.4" stroke="#1f3319" stroke-width="2.1" fill="none"/></svg>
<div class="t" style="left:164.3px;top:414px;font-size:26px;color:#bbbbbb;letter-spacing:0.49px;line-height:40px;height:40px;font-weight:normal;">SimpleCollection</div>
<svg style="left:128px;top:460px" width="28" height="28" viewBox="0 0 28 28"><circle cx="14" cy="14" r="14" fill="#518a45"/><path d="M10.4,8.8 h7.2 M10.4,19.2 h7.2 M14,8.8 v10.4" stroke="#1f3319" stroke-width="2.1" fill="none"/></svg>
<div class="t" style="left:164.3px;top:454px;font-size:26px;color:#bbbbbb;letter-spacing:0.762px;line-height:40px;height:40px;font-weight:normal;">SimpleSet</div>
<svg style="left:59px;top:505px" width="11" height="17"><polyline points="1,1 10,8.5 1,16" fill="none" stroke="#adadad" stroke-width="2.4"/></svg>
<svg style="left:92px;top:500.2px" width="28.2" height="24"><rect x="0" y="5.5" width="4.1" height="18.5" fill="#87939a"/><rect x="6.1" y="5.5" width="4.1" height="18.5" fill="#62b543"/><rect x="12.2" y="0" width="4.1" height="24" fill="#87939a"/><rect x="18.2" y="3.7" width="4.1" height="20.3" fill="#40b6e0"/><rect x="24.1" y="8.3" width="4.1" height="15.7" fill="#87939a"/></svg>
<div class="t" style="left:129px;top:494px;font-size:26px;color:#bbbbbb;letter-spacing:0.745px;line-height:40px;height:40px;font-weight:normal;">External Libraries</div>
<svg style="left:59px;top:545px" width="11" height="17"><polyline points="1,1 10,8.5 1,16" fill="none" stroke="#adadad" stroke-width="2.4"/></svg>
<svg style="left:92px;top:539px" width="31" height="31"><path d="M0,0 H20 V11 A10,10 0 0 0 10,18 H0 Z" fill="#87939a"/><polyline points="2.5,3 7.5,7.5 2.5,12" fill="none" stroke="#3c3f41" stroke-width="1.8"/><circle cx="20.5" cy="20.5" r="9.8" fill="#40b6e0"/><path d="M20.5,15 V21 L24,24.5" stroke="#263238" stroke-width="2.2" fill="none"/></svg>
<div class="t" style="left:129px;top:534px;font-size:26px;color:#bbbbbb;letter-spacing:0.75px;line-height:40px;height:40px;font-weight:normal;">Scratches and Consoles</div>
</div></div>
<div class="abs" style="left:42px;top:984px;width:306px;height:28px;background:#3f4244"></div>
<div class="abs" style="left:46px;top:988.4px;width:130px;height:18.8px;border-radius:9.4px;background:#58595b;border:1.2px solid #383b3d"></div>
<div class="abs" style="left:42px;top:1012px;width:2288px;height:2px;background:#323232"></div>
<div class="abs" style="left:42px;top:1014px;width:2288px;height:548px;background:#3c3f41"></div>
<div class="t" style="left:55px;top:1020px;font-size:26px;color:#bbbbbb;letter-spacing:0.744px;line-height:40px;height:40px;font-weight:normal;">Problems:</div>
<div class="t" style="left:216.5px;top:1020px;font-size:26px;color:#bbbbbb;letter-spacing:0.88px;line-height:40px;height:40px;font-weight:normal;">Current File</div>
<div class="t" style="left:370px;top:1020px;font-size:26px;color:#787878;letter-spacing:0px;line-height:40px;height:40px;font-weight:normal;">15</div>
<div class="t" style="left:446.5px;top:1020px;font-size:26px;color:#bbbbbb;letter-spacing:0.851px;line-height:40px;height:40px;font-weight:normal;">Project Errors</div>
<div class="t" style="left:627px;top:1020px;font-size:26px;color:#787878;letter-spacing:0px;line-height:40px;height:40px;font-weight:normal;">9</div>
<div class="abs" style="left:42px;top:1066px;width:2288px;height:2px;background:#323232"></div>
<div class="abs" style="left:192px;top:1062px;width:230px;height:6px;background:#747a80"></div>
<svg style="left:2297.7px;top:1027.7px" width="24.6" height="24.6"><polygon points="9.30,3.06 9.62,0.30 14.98,0.30 15.30,3.06 18.80,5.08 21.35,3.97 24.04,8.62 21.80,10.28 21.80,14.32 24.04,15.98 21.35,20.63 18.80,19.52 15.30,21.54 14.98,24.30 9.62,24.30 9.30,21.54 5.80,19.52 3.25,20.63 0.56,15.98 2.80,14.32 2.80,10.28 0.56,8.62 3.25,3.97 5.80,5.08" fill="#afb1b3" stroke="#afb1b3" stroke-width="1" stroke-linejoin="round"/><circle cx="12.3" cy="12.3" r="4.55" fill="#3c3f41"/></svg>
<div class="abs" style="left:98px;top:1066px;width:2px;height:497px;background:#323232"></div>
<svg style="left:56px;top:1087.4px" width="33" height="30" viewBox="0 0 33 30"><path d="M0,10.2 C6,-3.2 22,-3.2 28,10.2 C22,23.6 6,23.6 0,10.2 Z" fill="#afb1b3"/><circle cx="14" cy="10.2" r="7" fill="#3c3f41"/><circle cx="14" cy="10.2" r="3.9" fill="#afb1b3"/><path d="M20.2,22.7 H32.2 L26.2,28.8 Z" fill="#d2d2d2"/></svg>
<svg style="left:58px;top:1138px" width="24.2" height="24"><rect x="0" y="0" width="24.2" height="24" fill="#afb1b3"/><rect x="4" y="3.8" width="8.5" height="16.2" fill="#3c3f41"/></svg>
<svg style="left:58px;top:1187.8px" width="24.2" height="28.4"><rect x="0" y="0" width="24.2" height="4" fill="#5e5e5e"/><rect x="0" y="24" width="24.2" height="4.2" fill="#5e5e5e"/><path d="M5.2,12.3 L12.1,6 L19,12.3 Z M5.2,16.2 L12.1,22.4 L19,16.2 Z" fill="#5e5e5e"/></svg>
<svg style="left:58px;top:1241.9px" width="24.2" height="24"><rect x="0" y="9.9" width="24.2" height="4" fill="#5e5e5e"/><path d="M5.2,0 L12.1,6.9 L19,0 Z M5.2,23.9 L12.1,17.1 L19,23.9 Z" fill="#5e5e5e"/></svg>
<svg style="left:59px;top:1291px" width="22.3" height="30" viewBox="0 0 26 30"><path d="M13,1 C19,1 23.2,5.6 23.2,11 C23.2,15 21,17.5 19.2,21 H6.8 C5,17.5 2.8,15 2.8,11 C2.8,5.6 7,1 13,1 Z" fill="#5c5c5c"/><rect x="7" y="23" width="12" height="2.1" fill="#5c5c5c"/><path d="M8,26.8 H18 L17,29 H9 Z" fill="#5c5c5c"/></svg>
<div class="abs" style="left:100px;top:1066px;width:2230px;height:496px;overflow:hidden"><div class="abs" style="left:-100px;top:-1066px;width:2330px;height:1584px">
<svg style="left:114px;top:1074px" width="28" height="28" viewBox="0 0 28 28"><circle cx="14" cy="14" r="14" fill="#3e86a0"/><path d="M18.6,10.4 A5.6,5.6 0 1 0 18.6,17.6" fill="none" stroke="#233a45" stroke-width="2.1"/></svg>
<div class="t" style="left:151px;top:1068px;font-size:26px;color:#bbbbbb;letter-spacing:0.68px;line-height:40px;height:40px;font-weight:normal;">ListSet.java</div>
<div class="t" style="left:311px;top:1068px;font-size:26px;color:#7d7d7d;letter-spacing:0.55px;line-height:40px;height:40px;font-weight:normal;">~/cs61bl/su22-s295/lab07  15 problems</div>
<div class="abs" style="left:100px;top:1108px;width:2230px;height:40px;background:#0d293e"></div>
<svg style="left:153.9px;top:1117.9px" width="20.2" height="20.2" viewBox="0 0 20 20"><circle cx="10" cy="10" r="10" fill="#a52929"/><rect x="8" y="4" width="4" height="7.2" fill="#0d293e"/><rect x="8" y="13.3" width="4" height="3.6" fill="#0d293e"/></svg>
<div class="t" style="left:187px;top:1108px;letter-spacing:0.95px">Array initializer expected<span style="color:#8a8a8a;letter-spacing:0.9px"> :53</span></div>
<svg style="left:153.9px;top:1157.9px" width="20.2" height="20.2" viewBox="0 0 20 20"><circle cx="10" cy="10" r="10" fill="#a52929"/><rect x="8" y="4" width="4" height="7.2" fill="#3c3f41"/><rect x="8" y="13.3" width="4" height="3.6" fill="#3c3f41"/></svg>
<div class="t" style="left:187px;top:1148px;letter-spacing:1.14px">Not a statement<span style="color:#8a8a8a;letter-spacing:0.9px"> :56</span></div>
<svg style="left:153.9px;top:1197.9px" width="20.2" height="20.2" viewBox="0 0 20 20"><circle cx="10" cy="10" r="10" fill="#a52929"/><rect x="8" y="4" width="4" height="7.2" fill="#3c3f41"/><rect x="8" y="13.3" width="4" height="3.6" fill="#3c3f41"/></svg>
<div class="t" style="left:187px;top:1188px;letter-spacing:1.134px">Unexpected token<span style="color:#8a8a8a;letter-spacing:0.9px"> :56</span></div>
<svg style="left:153.9px;top:1237.9px" width="20.2" height="20.2" viewBox="0 0 20 20"><circle cx="10" cy="10" r="10" fill="#a52929"/><rect x="8" y="4" width="4" height="7.2" fill="#3c3f41"/><rect x="8" y="13.3" width="4" height="3.6" fill="#3c3f41"/></svg>
<div class="t" style="left:187px;top:1228px;letter-spacing:1.134px">Unexpected token<span style="color:#8a8a8a;letter-spacing:0.9px"> :56</span></div>
<svg style="left:153.9px;top:1277.9px" width="20.2" height="20.2" viewBox="0 0 20 20"><circle cx="10" cy="10" r="10" fill="#a52929"/><rect x="8" y="4" width="4" height="7.2" fill="#3c3f41"/><rect x="8" y="13.3" width="4" height="3.6" fill="#3c3f41"/></svg>
<div class="t" style="left:187px;top:1268px;letter-spacing:1.134px">Unexpected token<span style="color:#8a8a8a;letter-spacing:0.9px"> :56</span></div>
<svg style="left:153.9px;top:1317.9px" width="20.2" height="20.2" viewBox="0 0 20 20"><circle cx="10" cy="10" r="10" fill="#a52929"/><rect x="8" y="4" width="4" height="7.2" fill="#3c3f41"/><rect x="8" y="13.3" width="4" height="3.6" fill="#3c3f41"/></svg>
<div class="t" style="left:187px;top:1308px;letter-spacing:1.14px">Not a statement<span style="color:#8a8a8a;letter-spacing:0.9px"> :56</span></div>
<svg style="left:153.9px;top:1357.9px" width="20.2" height="20.2" viewBox="0 0 20 20"><circle cx="10" cy="10" r="10" fill="#a52929"/><rect x="8" y="4" width="4" height="7.2" fill="#3c3f41"/><rect x="8" y="13.3" width="4" height="3.6" fill="#3c3f41"/></svg>
<div class="t" style="left:187px;top:1348px;letter-spacing:1.134px">Unexpected token<span style="color:#8a8a8a;letter-spacing:0.9px"> :56</span></div>
<svg style="left:153.9px;top:1397.9px" width="20.2" height="20.2" viewBox="0 0 20 20"><circle cx="10" cy="10" r="10" fill="#a52929"/><rect x="8" y="4" width="4" height="7.2" fill="#3c3f41"/><rect x="8" y="13.3" width="4" height="3.6" fill="#3c3f41"/></svg>
<div class="t" style="left:187px;top:1388px;letter-spacing:1.134px">Unexpected token<span style="color:#8a8a8a;letter-spacing:0.9px"> :56</span></div>
<svg style="left:153.9px;top:1437.9px" width="20.2" height="20.2" viewBox="0 0 20 20"><circle cx="10" cy="10" r="10" fill="#a52929"/><rect x="8" y="4" width="4" height="7.2" fill="#3c3f41"/><rect x="8" y="13.3" width="4" height="3.6" fill="#3c3f41"/></svg>
<div class="t" style="left:187px;top:1428px;letter-spacing:1.14px">Not a statement<span style="color:#8a8a8a;letter-spacing:0.9px"> :56</span></div>
<svg style="left:151.75px;top:1475.7px" width="24.5" height="22" viewBox="0 0 24.5 22"><path d="M12.25,0 L24.5,22 H0 Z" fill="#c99a1a"/><rect x="10.3" y="7.4" width="3.9" height="6.2" fill="#3c3f41"/><rect x="10.3" y="15.8" width="3.9" height="3.8" fill="#3c3f41"/></svg>
<div class="t" style="left:187px;top:1468px;letter-spacing:1.008px">Explicit type argument Integer can be replaced with &lt;&gt;<span style="color:#8a8a8a;letter-spacing:0.9px"> :12</span></div>
<svg style="left:151.75px;top:1515.7px" width="24.5" height="22" viewBox="0 0 24.5 22"><path d="M12.25,0 L24.5,22 H0 Z" fill="#c99a1a"/><rect x="10.3" y="7.4" width="3.9" height="6.2" fill="#3c3f41"/><rect x="10.3" y="15.8" width="3.9" height="3.8" fill="#3c3f41"/></svg>
<div class="t" style="left:187px;top:1508px;letter-spacing:1.235px">'if' statement can be simplified<span style="color:#8a8a8a;letter-spacing:0.9px"> :33</span></div>
<svg style="left:151.75px;top:1555.7px" width="24.5" height="22" viewBox="0 0 24.5 22"><path d="M12.25,0 L24.5,22 H0 Z" fill="#c99a1a"/><rect x="10.3" y="7.4" width="3.9" height="6.2" fill="#3c3f41"/><rect x="10.3" y="15.8" width="3.9" height="3.8" fill="#3c3f41"/></svg>
<div class="t" style="left:187px;top:1548px;letter-spacing:0.984px">C-style array declaration of local variable 'returnArray'<span style="color:#8a8a8a;letter-spacing:0.9px"> :53</span></div>
</div></div>
<div class="abs" style="left:0;top:1562px;width:2330px;height:2px;background:#2d2d2d"></div>
<div class="abs" style="left:0;top:1564px;width:2330px;height:20px;background:#3c3f41"></div>
<div class="abs" style="left:388px;top:1564px;width:171px;height:20px;background:#2d2f30"></div>
<div class="t" style="left:96.5px;top:1561.8px;font-size:21px;color:#bbbbbb;letter-spacing:0.582px;line-height:44px;height:44px;font-weight:normal;">Git</div>
<div class="t" style="left:199px;top:1561.8px;font-size:21px;color:#bbbbbb;letter-spacing:-0.512px;line-height:44px;height:44px;font-weight:normal;">Run</div>
<div class="t" style="left:309px;top:1561.8px;font-size:21px;color:#bbbbbb;letter-spacing:0.072px;line-height:44px;height:44px;font-weight:normal;">TODO</div>
<div class="t" style="left:445px;top:1561.8px;font-size:21px;color:#ffffff;letter-spacing:-0.1px;line-height:44px;height:44px;font-weight:bold;">Problems</div>
<div class="t" style="left:616.5px;top:1561.8px;font-size:21px;color:#bbbbbb;letter-spacing:0.735px;line-height:44px;height:44px;font-weight:normal;">Terminal</div>
<div class="t" style="left:786px;top:1561.8px;font-size:21px;color:#bbbbbb;letter-spacing:0.857px;line-height:44px;height:44px;font-weight:normal;">Style Checker</div>
<div class="t" style="left:1010.5px;top:1561.8px;font-size:21px;color:#bbbbbb;letter-spacing:0.682px;line-height:44px;height:44px;font-weight:normal;">Python Packages</div>
<div class="t" style="left:1262.5px;top:1561.8px;font-size:21px;color:#bbbbbb;letter-spacing:0.826px;line-height:44px;height:44px;font-weight:normal;">Build</div>
<div class="t" style="left:2223px;top:1561.8px;font-size:21px;color:#bbbbbb;letter-spacing:0.49px;line-height:44px;height:44px;font-weight:normal;">Event Log</div>
<svg style="left:66px;top:1574px" width="18" height="24"><circle cx="4" cy="4" r="3.6" fill="#afb1b3"/><circle cx="14" cy="8" r="3.2" fill="#afb1b3"/><path d="M4,4 V24" stroke="#afb1b3" stroke-width="2.6"/></svg>
<svg style="left:168px;top:1576px" width="18" height="22"><path d="M0,0 L17,10 L0,20 Z" fill="#afb1b3"/></svg>
<svg style="left:278px;top:1578px" width="22" height="20"><rect x="0" y="0" width="4" height="3.4" fill="#afb1b3"/><rect x="7" y="0" width="14" height="3.4" fill="#afb1b3"/></svg>
<svg style="left:412.9px;top:1575px" width="20.6" height="20.6"><circle cx="10.3" cy="10.3" r="10.3" fill="#c75450"/><rect x="8.5" y="4" width="3.6" height="8" fill="#2d2f30"/></svg>
<svg style="left:584px;top:1576px" width="22" height="20"><rect x="0" y="0" width="22" height="20" fill="#afb1b3"/><polyline points="3,3.5 9,9.5 3,15.5" fill="none" stroke="#3c3f41" stroke-width="2.4"/></svg>
<svg style="left:750px;top:1576px" width="24" height="20"><rect x="0" y="0" width="24" height="20" fill="#afb1b3"/><rect x="4" y="3.5" width="16" height="16" fill="#3c3f41"/><rect x="10" y="3.5" width="4" height="6" fill="#afb1b3"/></svg>
<svg style="left:976px;top:1575px" width="26" height="20"><path d="M13,0 L26,6.5 L13,13 L0,6.5 Z" fill="#afb1b3"/></svg>
<svg style="left:1223px;top:1574px" width="22" height="22"><path d="M0,9 L10,0 L18,0 L9,9 L13,13 L9,17 Z" fill="#afb1b3"/></svg>
<svg style="left:2188.5px;top:1573.8px" width="25.4" height="25.4"><circle cx="12.7" cy="12.7" r="12.7" fill="#499c54"/><path d="M8.5,12.5 L13.2,8.2 V20" stroke="#ffffff" stroke-width="2.8" fill="none"/></svg>
<div class="abs" style="left:0;top:0;width:2330px;height:38px;background:#3c3f41"></div>
<div class="abs" style="left:0;top:38px;width:2330px;height:2px;background:#323232"></div>
<div class="t" style="left:25px;top:-11px;font-size:24px;color:#bbbbbb;letter-spacing:1.282px;line-height:40px;height:40px;font-weight:bold;">lab07</div>
<svg style="left:100px;top:-8px" width="12" height="36"><polyline points="1,0 10,17 1,34" fill="none" stroke="#66696b" stroke-width="1.5"/></svg>
<svg style="left:120px;top:-4px" width="28" height="28" viewBox="0 0 28 28"><circle cx="14" cy="14" r="14" fill="#3e86a0"/><path d="M18.6,10.4 A5.6,5.6 0 1 0 18.6,17.6" fill="none" stroke="#233a45" stroke-width="2.1"/></svg>
<div class="t" style="left:157px;top:-11px;font-size:24px;color:#6897bb;letter-spacing:0.771px;line-height:40px;height:40px;font-weight:normal;">ListSet</div>
<svg style="left:156px;top:21px" width="78.0" height="5.2"><polyline points="0.0,0.7 3.0,3.9 6.0,0.7 9.0,3.9 12.0,0.7 15.0,3.9 18.0,0.7 21.0,3.9 24.0,0.7 27.0,3.9 30.0,0.7 33.0,3.9 36.0,0.7 39.0,3.9 42.0,0.7 45.0,3.9 48.0,0.7 51.0,3.9 54.0,0.7 57.0,3.9 60.0,0.7 63.0,3.9 66.0,0.7 69.0,3.9 72.0,0.7 75.0,3.9 78.0,0.7" fill="none" stroke="#bc3f3c" stroke-width="1.4"/></svg>
<svg style="left:244px;top:-8px" width="12" height="36"><polyline points="1,0 10,17 1,34" fill="none" stroke="#66696b" stroke-width="1.5"/></svg>
<svg style="left:264px;top:-4px" width="28" height="28" viewBox="0 0 28 28"><circle cx="14" cy="14" r="14" fill="#b4697b"/><text x="14" y="19.64" text-anchor="middle" font-family="Liberation Sans" font-size="21" font-weight="normal" fill="#3b2329">m</text></svg>
<div class="t" style="left:301px;top:-11px;font-size:24px;color:#6897bb;letter-spacing:0.662px;line-height:40px;height:40px;font-weight:normal;">toIntArray</div>
<svg style="left:300px;top:21px" width="111.0" height="5.2"><polyline points="0.0,0.7 3.0,3.9 6.0,0.7 9.0,3.9 12.0,0.7 15.0,3.9 18.0,0.7 21.0,3.9 24.0,0.7 27.0,3.9 30.0,0.7 33.0,3.9 36.0,0.7 39.0,3.9 42.0,0.7 45.0,3.9 48.0,0.7 51.0,3.9 54.0,0.7 57.0,3.9 60.0,0.7 63.0,3.9 66.0,0.7 69.0,3.9 72.0,0.7 75.0,3.9 78.0,0.7 81.0,3.9 84.0,0.7 87.0,3.9 90.0,0.7 93.0,3.9 96.0,0.7 99.0,3.9 102.0,0.7 105.0,3.9 108.0,0.7 111.0,3.9" fill="none" stroke="#bc3f3c" stroke-width="1.4"/></svg>
<svg style="left:1303px;top:-7px" width="31" height="29" viewBox="0 0 31 29"><ellipse cx="19" cy="8.5" rx="6.3" ry="7.6" fill="#afb1b3"/><path d="M10,28 C10,20.5 13,17.5 19,17 C25.5,17.5 29.5,19.5 29.5,23 L29.5,23.4 L24,23.4 L24,28 Z" fill="#afb1b3"/><ellipse cx="14.6" cy="8" rx="7.4" ry="8.6" fill="#3c3f41"/><path d="M-0.6,28.6 C-0.6,20.5 3.5,17.6 9.5,16.2 L12,13.5 H17.5 L19.8,16.2 C25.4,17.6 26.6,20.5 26.6,28.6 Z" fill="#3c3f41"/><ellipse cx="14.6" cy="8" rx="6.2" ry="7.4" fill="#afb1b3"/><path d="M0.8,28 C0.8,21.5 4,19 10,17.5 L12.2,13.6 H17 L19.2,17.5 C24.2,19 25.2,21.5 25.2,28 Z" fill="#afb1b3"/></svg>
<svg style="left:1338px;top:7.5px" width="17" height="9"><path d="M0,0 H17 L8.5,8.8 Z" fill="#afb1b3"/></svg>
<div class="abs" style="left:1370px;top:0;width:2px;height:30px;background:#515456"></div>
<svg style="left:1386px;top:-8px" width="34" height="34" viewBox="0 0 34 34"><path d="M12,11.5 L30.5,29" stroke="#499c54" stroke-width="4.8" fill="none"/><path d="M4.2,15.5 L17,2.6" stroke="#499c54" stroke-width="6" fill="none"/></svg>
<div class="abs" style="left:1442px;top:-12px;width:222px;height:44px;border:2px solid #5e6162;border-radius:7px"></div>
<svg style="left:1463px;top:1px" width="26" height="19"><path d="M0,9.5 L10.5,0 V19 Z" fill="#7a4c38"/><path d="M25,9.5 L14.5,0 V19 Z" fill="#486b40"/></svg>
<div class="t" style="left:1500.5px;top:-10px;font-size:22.5px;color:#bbbbbb;letter-spacing:0.1px;line-height:40px;height:40px;font-weight:normal;">ListSetTest</div>
<svg style="left:1627px;top:6.5px" width="18" height="10"><path d="M0,0 H18 L9,9.5 Z" fill="#afb1b3"/></svg>
<svg style="left:1691.8px;top:-2.8px" width="21" height="26"><path d="M0,0 L20,12.5 L0,25 Z" fill="#499c54"/></svg>
<svg style="left:1740px;top:-6px" width="25" height="31" viewBox="0 0 25 31"><path d="M7.2,6 A5.3,5.3 0 0 1 17.8,6 Z" fill="#499c54"/><path d="M12.5,4.5 C19.5,4.5 20.6,9 20.6,17.5 C20.6,25.5 17,29.8 12.5,29.8 C8,29.8 4.4,25.5 4.4,17.5 C4.4,9 5.5,4.5 12.5,4.5 Z" fill="#499c54"/><rect x="0" y="10.7" width="25" height="3.2" fill="#499c54"/><rect x="0" y="17.2" width="25" height="3.1" fill="#499c54"/><rect x="0" y="23.5" width="25" height="3.1" fill="#499c54"/><rect x="8.2" y="14.3" width="8.6" height="2.5" fill="#3c3f41"/><rect x="8.2" y="20.3" width="8.6" height="2.8" fill="#3c3f41"/></svg>
<svg style="left:1789.5px;top:-6px" width="31" height="33" viewBox="0 0 31 33"><path d="M0.3,0 H20.8 V11.7 H16.5 V8 H10.8 V24 L14.6,20.4 V25.8 C13,27 12,27.7 10.3,28.4 C5,26 0.3,22 0.3,16 Z" fill="#afb1b3"/><path d="M14.6,12.4 L31,23 L14.6,33 Z" fill="#3c3f41"/><path d="M16.5,14.2 L30.2,23 L16.5,32 Z" fill="#499c54"/></svg>
<div class="abs" style="left:1846px;top:-4px;width:20px;height:24px;background:#5a5a5a"></div>
<div class="abs" style="left:1888px;top:0;width:2px;height:30px;background:#515456"></div>
<div class="t" style="left:1909px;top:-10px;font-size:22.5px;color:#bbbbbb;letter-spacing:0.3px;line-height:40px;height:40px;font-weight:normal;">Git:</div>
<svg style="left:1969px;top:-6px" width="26" height="27" viewBox="0 0 26 27"><path d="M23.5,0 L5,20" stroke="#3592c4" stroke-width="3.6" fill="none"/><path d="M1,26 V9.5 L17,26 Z" fill="#3592c4"/></svg>
<svg style="left:2020px;top:-6px" width="29" height="27" viewBox="0 0 29 27"><path d="M2,14.5 L10.5,23 L27,1.5" stroke="#499c54" stroke-width="4.2" fill="none"/></svg>
<svg style="left:2071px;top:-6px" width="26" height="28" viewBox="0 0 26 28"><path d="M2,26.5 L20,6" stroke="#499c54" stroke-width="3.6" fill="none"/><path d="M25,0 V16.5 L9,0 Z" fill="#499c54"/></svg>
<svg style="left:2121.8px;top:-3.9px" width="28" height="28"><circle cx="14" cy="14" r="12.3" fill="none" stroke="#afb1b3" stroke-width="3.4"/><path d="M14.2,6 V14 L19.8,18.4" stroke="#afb1b3" stroke-width="3.2" fill="none"/></svg>
<svg style="left:2176px;top:-6px" width="28" height="30" viewBox="0 0 28 30"><path d="M7,9.8 H17.3 A8.15,8.15 0 0 1 17.3,26.1 H8.3" stroke="#afb1b3" stroke-width="3.9" fill="none"/><path d="M0.3,10.3 L7.9,2.5 V17.8 Z" fill="#afb1b3"/></svg>
<div class="abs" style="left:2220px;top:0;width:2px;height:30px;background:#515456"></div>
<svg style="left:2240px;top:-6px" width="30" height="31" viewBox="0 0 30 31"><circle cx="11.6" cy="12.2" r="9.5" fill="none" stroke="#afb1b3" stroke-width="3.8"/><path d="M18.2,19.6 L26.2,27.8" stroke="#afb1b3" stroke-width="4.4"/></svg>
<svg style="left:2293.7px;top:-1.4000000000000004px" width="24.6" height="24.6"><polygon points="9.30,3.06 9.62,0.30 14.98,0.30 15.30,3.06 18.80,5.08 21.35,3.97 24.04,8.62 21.80,10.28 21.80,14.32 24.04,15.98 21.35,20.63 18.80,19.52 15.30,21.54 14.98,24.30 9.62,24.30 9.30,21.54 5.80,19.52 3.25,20.63 0.56,15.98 2.80,14.32 2.80,10.28 0.56,8.62 3.25,3.97 5.80,5.08" fill="#afb1b3" stroke="#afb1b3" stroke-width="1" stroke-linejoin="round"/><circle cx="12.3" cy="12.3" r="4.55" fill="#3c3f41"/></svg>
</div>
</body></html>
